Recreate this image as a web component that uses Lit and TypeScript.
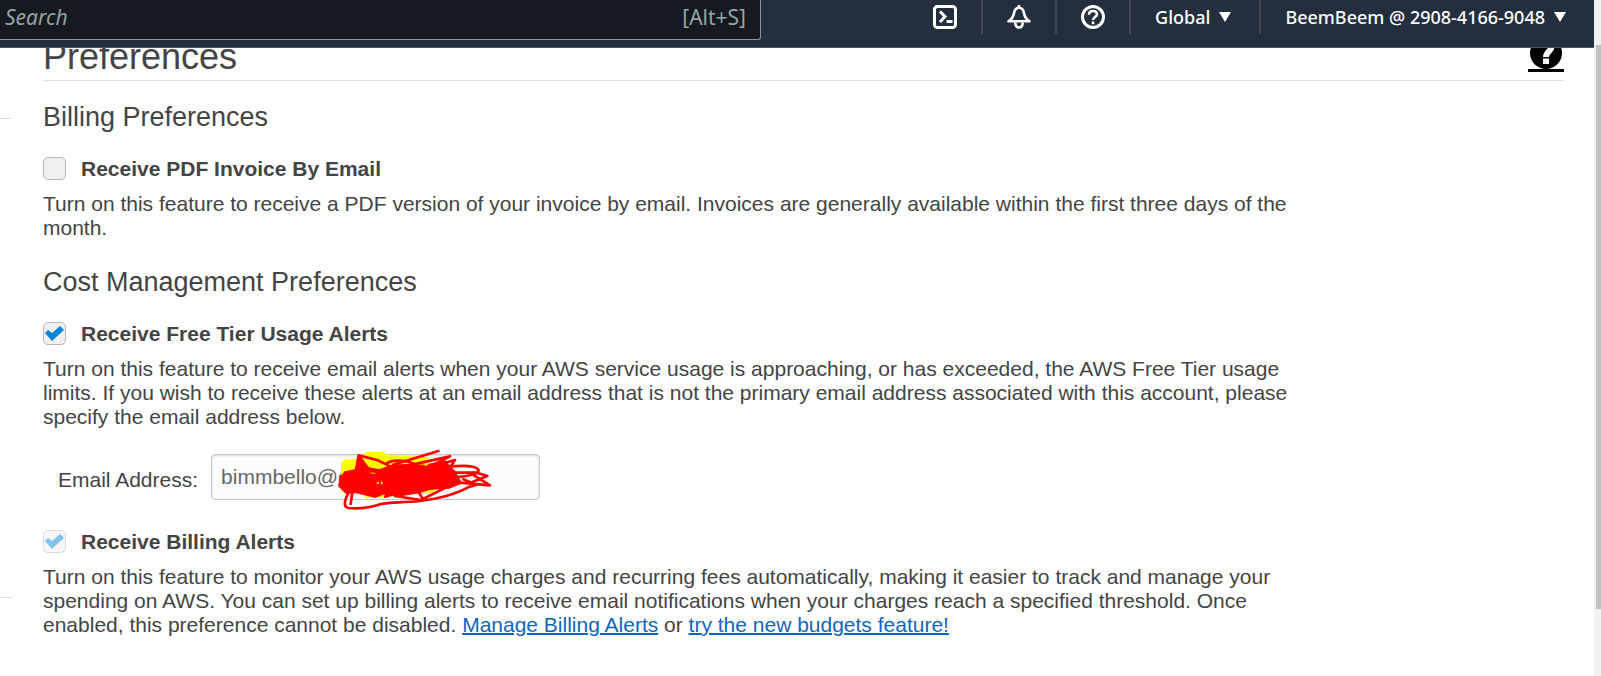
import { LitElement, html, css, svg } from "lit";
import { customElement, property } from "lit/decorators.js";

const terminalIcon = svg`
  <rect x="1.5" y="1.5" width="21" height="21" rx="3" />
  <path d="M7 6.5l5 5-5 5.500M13.500 16.500h6" />`;

const bellIcon = svg`
  <path
    stroke-width="2.6"
    stroke-linejoin="round"
    d="M12 0v3M1.500 16.300h21c-4-2.500-5-5-5.500-8C16.500 5 14.500 2.800 12 2.800S7.500 5 7 8.300c-.5 3-1.500 5.500-5.500 8z"
  />
  <path stroke-width="2.6" d="M8.300 17.500c0 3 1.500 5 3.700 5s3.700-2 3.700-5" />`;

const helpIcon = svg`
  <circle cx="12" cy="12" r="10.500" />
  <path stroke-width="2.6" d="M8 9.800c0-2.500 1.600-3.800 4-3.800s4 1.300 4 3.300c0 2.700-4 2.800-4 5.700M12 16.500v2.800" />`;

@customElement("top-bar")
export class TopBar extends LitElement {
  static styles = css`
    :host {
      display: flex;
      justify-content: space-between;
      align-items: flex-start;
      box-sizing: border-box;
      height: 48px;
      background: #232f3e;
      border-bottom: 1px solid #4c5665;
      color: #fff;
      font-family: "Noto Sans", "Open Sans", sans-serif;
    }
    .search {
      display: flex;
      align-items: center;
      box-sizing: border-box;
      flex: 0 1 761px;
      height: 40px;
      padding: 0 14px 6px 5px;
      background: #16191f;
      border: solid #8d9699;
      border-width: 0 1px 1px 0;
      border-bottom-right-radius: 3px;
      color: #95a5a6;
      font-size: 21px;
    }
    .search input {
      flex: 1;
      min-width: 0;
      padding: 0;
      border: 0;
      outline: 0;
      background: none;
      color: inherit;
      font: inherit;
    }
    .search input::placeholder {
      color: #95a5a6;
      font-style: italic;
      opacity: 1;
    }
    nav {
      display: flex;
      height: 34px;
    }
    button {
      display: flex;
      align-items: center;
      gap: 9px;
      padding: 0 24px;
      border: 0;
      background: none;
      color: inherit;
      font-family: inherit;
      font-size: 18px;
      font-weight: 500;
      white-space: nowrap;
    }
    button + button {
      border-left: 2px solid #414750;
    }
    .menu {
      padding-right: 28px;
    }
    .icon {
      width: 24px;
      height: 24px;
      fill: none;
      stroke: #fff;
      stroke-width: 3;
    }
    .caret {
      width: 12px;
      height: 10px;
      fill: #fff;
    }
  `;

  render() {
    return html`
      <label class="search">
        <input type="search" placeholder="Search" aria-label="Search" />
        <span>[Alt+S]</span>
      </label>
      <nav>
        ${this.iconButton("CloudShell", terminalIcon)}
        ${this.iconButton("Notifications", bellIcon)}
        ${this.iconButton("Support", helpIcon)}
        ${this.menuButton("Global")}
        ${this.menuButton("BeemBeem @ 2908-4166-9048")}
      </nav>
    `;
  }

  private iconButton(name: string, shape: unknown) {
    return html`<button aria-label=${name}>
      <svg class="icon" viewBox="0 0 24 24">${shape}</svg>
    </button>`;
  }

  private menuButton(text: string) {
    return html`<button class="menu">
      ${text}
      <svg class="caret" viewBox="0 0 12 10"><path d="M0 0h12L6 10z" /></svg>
    </button>`;
  }
}

@customElement("preference-option")
export class PreferenceOption extends LitElement {
  @property() label = "";
  @property({ type: Boolean }) checked = false;
  @property({ type: Boolean }) disabled = false;

  static styles = css`
    :host {
      display: block;
    }
    label {
      display: flex;
      align-items: flex-start;
      gap: 15px;
      margin-bottom: 11px;
      font-weight: 700;
    }
    input {
      appearance: none;
      box-sizing: border-box;
      flex: none;
      width: 23px;
      height: 23px;
      margin: 0;
      border: 1px solid #b8b8b8;
      border-radius: 5px;
      background: #efefef;
    }
    input:checked::before {
      content: "";
      display: block;
      width: 21px;
      height: 21px;
      background: #0a84d6;
      clip-path: polygon(1px 10px, 4px 7px, 8px 10px, 16px 3px, 20px 7px, 8px 18px);
    }
    input:disabled {
      opacity: 0.5;
    }
  `;

  render() {
    return html`
      <label>
        <input type="checkbox" .checked=${this.checked} ?disabled=${this.disabled} />
        <span>${this.label}</span>
      </label>
      <slot></slot>
    `;
  }
}

@customElement("app-root")
export class AppRoot extends LitElement {
  static styles = css`
    :host {
      display: grid;
      grid-template-columns: minmax(0, 1fr) 7px;
      grid-template-rows: 48px 1fr;
      min-height: 100vh;
      background: #fff;
      color: #444;
      font-family: "Liberation Sans", Arial, sans-serif;
      font-size: 21px;
      line-height: 24px;
    }
    top-bar {
      position: relative;
      z-index: 1;
    }
    .body {
      display: flex;
      align-items: flex-start;
      gap: 32px;
      grid-column: 1;
    }
    .side {
      box-sizing: border-box;
      flex: none;
      width: 11px;
      height: 480px;
      margin-top: 70px;
      border: solid #ddd;
      border-width: 1px 0;
    }
    main {
      flex: 1;
      min-width: 0;
      margin-top: -12px;
      padding-right: 30px;
    }
    .title {
      display: flex;
      justify-content: space-between;
      align-items: flex-start;
      height: 44px;
      border-bottom: 1px solid #e1e1e1;
    }
    h1,
    h2,
    p {
      margin: 0;
      font-weight: 400;
    }
    h1 {
      font-size: 36px;
      line-height: 42px;
    }
    h2 {
      margin: 20px 0 24px;
      font-size: 27px;
      line-height: 32px;
    }
    section + section h2 {
      margin-top: 26px;
    }
    .help {
      display: block;
      height: 33px;
      border-bottom: 3px solid #000;
    }
    .help svg {
      display: block;
      width: 36px;
      height: 33px;
    }
    p {
      max-width: 1250px;
    }
    a {
      color: #1166bb;
      text-decoration-thickness: 2px;
    }
    .email {
      display: flex;
      align-items: center;
      gap: 13px;
      margin: 25px 0 30px 15px;
    }
    .email label {
      padding-top: 6px;
    }
    .field {
      position: relative;
    }
    .field input {
      display: block;
      box-sizing: border-box;
      width: 329px;
      height: 46px;
      padding: 0 9px;
      border: 1px solid #c4c4c4;
      border-radius: 4px;
      background: #fcfcfc;
      box-shadow: inset 0 1px 3px #ddd;
      color: #666;
      font: inherit;
    }
    .scribble {
      position: absolute;
      left: 109px;
      top: -14px;
      width: 190px;
      height: 80px;
      pointer-events: none;
    }
    .marker {
      fill: #ff0;
    }
    .pen {
      fill: none;
      stroke: #f00;
      stroke-width: 8;
      stroke-linejoin: round;
      stroke-linecap: round;
    }
    .ink {
      fill: #f00;
    }
    .scroll {
      grid-column: 2;
      grid-row: 1 / span 2;
      padding: 45px 0 0 2px;
      background: #f1f1f1;
    }
    .thumb {
      height: 564px;
      background: #c1c1c1;
    }
  `;

  render() {
    return html`
      <top-bar></top-bar>
      <div class="scroll"><div class="thumb"></div></div>
      <div class="body">
        <div class="side"></div>
        <main>
          <div class="title">
            <h1>Preferences</h1>
            <a class="help" href="#help" aria-label="Help">
              <svg viewBox="0 0 36 33">
                <circle cx="18" cy="17" r="16" />
                <path
                  d="M11.500 12c0-4 3-6 6.500-6s5.500 2 5.500 5c0 4-5.500 4.500-5.500 10M18 22.500v5.500"
                  fill="none"
                  stroke="#fff"
                  stroke-width="6"
                />
              </svg>
            </a>
          </div>
          <section>
            <h2>Billing Preferences</h2>
            <preference-option label="Receive PDF Invoice By Email">
              <p>
                Turn on this feature to receive a PDF version of your invoice by email. Invoices are
                generally available within the first three days of the month.
              </p>
            </preference-option>
          </section>
          <section>
            <h2>Cost Management Preferences</h2>
            <preference-option label="Receive Free Tier Usage Alerts" checked>
              <p>
                Turn on this feature to receive email alerts when your AWS service usage is
                approaching, or has exceeded, the AWS Free Tier usage limits. If you wish to receive
                these alerts at an email address that is not the primary email address associated
                with this account, please specify the email address below.
              </p>
            </preference-option>
            <div class="email">
              <label for="email">Email Address:</label>
              <div class="field">
                <input id="email" type="text" value="bimmbello@g" />
                ${this.scribble()}
              </div>
            </div>
            <preference-option label="Receive Billing Alerts" checked disabled>
              <p>
                Turn on this feature to monitor your AWS usage charges and recurring fees
                automatically, making it easier to track and manage your spending on AWS. You can
                set up billing alerts to receive email notifications when your charges reach a
                specified threshold. Once enabled, this preference cannot be disabled.
                <a href="#alerts">Manage Billing Alerts</a> or
                <a href="#budgets">try the new budgets feature!</a>
              </p>
            </preference-option>
          </section>
        </main>
      </div>
    `;
  }

  // Highlighter patch and red pen strokes that hide the end of the address.
  private scribble() {
    return html`<svg class="scribble" viewBox="0 0 570 240" aria-hidden="true">
      <path
        class="marker"
        d="M63 70l12-12h35V46h25V36h50l20 8 45 3 75 5 10 60 10 46h-80l-60 14-70 2v-14l-45-3H63z"
      />
      <path
        class="ink"
        d="M54 138l6-28 14-16 30-6 10-32 14 8 20 18 30 6 36-14 40-2 60 2 60-14 20 20 14 16 10 20 10 14-40 16-60 4-30 10-50 8-60-4-30 8-50-12-30 2z"
      />
      <path
        class="pen"
        d="M116 46L98 150 92 192M116 46l55 14 34 16M116 46l24 34M122 50l-8 60M200 70c20-14 60-8 84 2M220 74L355 33M250 80L390 49l-60 30M300 90l105-30-16 24M384 80c50-4 80-4 90 8s-30 22-70 24M390 98l80 0 32 10-50 20M456 102l54 34-90-8M430 118l40 16-26 8M72 104l-8 28 30-16M120 140l-16 14 50-14-12 24 42-12-20 18 50-20-18 20 44-14M225 168l78 12 80-40M250 156l46 0 12 20M448 140c-36 22-100 38-148 43-60 6-90 2-120 10-34 12-60 14-95 11-16-4-10-22-6-32 8-16 12-26 20-40"
      />
      <path
        class="marker"
        d="M166 130l12-5-2 7zM184 122l5 8-7 4zM150 97l20 3-12 2zM312 74l16-4-10 9z"
      />
    </svg>`;
  }
}
